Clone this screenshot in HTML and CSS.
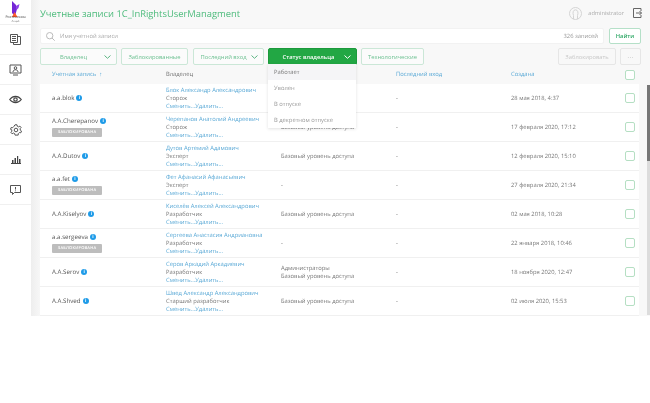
FILE: index.html
```html
<!DOCTYPE html>
<html lang="ru">
<head>
<meta charset="utf-8">
<title>Учетные записи</title>
<link rel="stylesheet" href="styles.css">
</head>
<body>
<div class="app">
  <aside class="side">
    <div class="logo">
      <svg width="9" height="16" viewBox="0 0 9 16"><path d="M1 0 L5 4 L6 8 L4 15 L1 12 Z" fill="#7426d6"/><path d="M5 5 L8.500 3 L7.500 7 L5.500 9 Z" fill="#8f3fe8"/><path d="M1 16 L3.500 11 L6.500 16 Z" fill="#ff5a2a"/></svg>
      <div class="logo-name">Ростелеком</div>
      <div class="logo-sub">Лицей</div>
    </div>
    <div class="nav"><svg width="13" height="13" viewBox="0 0 13 13" fill="none" stroke="#555" stroke-width="1"><path d="M1.500 1.500h7v8h-7zM3 3.500h4M3 5.500h4M3 7.500h4M8.500 3.500h3v8h-7v-2"/></svg></div>
    <div class="nav"><svg width="13" height="12" viewBox="0 0 13 12" fill="none" stroke="#555" stroke-width="1"><path d="M1 1h11v8H1z"/><circle cx="6.500" cy="4" r="1.300"/><path d="M4 8c0-3 5-3 5 0M4 11h5" /></svg></div>
    <div class="nav"><svg width="13" height="9" viewBox="0 0 13 9" fill="none" stroke="#444" stroke-width="1.200"><path d="M.7 4.500C4 .3 9 .3 12.300 4.500 9 8.700 4 8.700.7 4.500z"/><circle cx="6.500" cy="4.500" r="1.700"/></svg></div>
    <div class="nav"><svg width="12" height="12" viewBox="0 0 12 12" fill="none" stroke="#555" stroke-width="1"><circle cx="6" cy="6" r="1.800"/><path d="M5 .8h2l.3 1.500 1.300.6 1.300-.8 1.200 1.500-1 1.100.2 1.500 1.200.8-.7 1.800-1.500-.2-1 1-.1 1.500H5l-.3-1.500-1.300-.6-1.300.8-1.200-1.500 1-1.100-.2-1.500L.5 5.300l.7-1.800 1.500.2 1-1z"/></svg></div>
    <div class="nav"><svg width="10" height="8" viewBox="0 0 10 8" fill="#444"><path d="M0 7h10v1H0zM1 4h1.500v3H1zM3.500 2H5v5H3.500zM6 0h1.200v7H6zM8 3h1.500v4H8z"/></svg></div>
    <div class="nav"><svg width="11" height="10" viewBox="0 0 11 10" fill="none" stroke="#555" stroke-width="1"><path d="M.5.500h10v7H4.500L2.500 9.500v-2h-2z"/><path d="M5.500 2v2.500M5.500 5.500v.7"/></svg></div>
  </aside>
  <main class="main">
    <header class="top">
      <h1 class="title">Учетные записи 1C_InRightsUserManagment</h1>
      <div class="user">
        <svg width="13" height="13" viewBox="0 0 13 13" fill="none" stroke="#d4d4d4" stroke-width="1"><circle cx="6.500" cy="6.500" r="6"/><path d="M4.500 12V8.500C3.500 6 4 2.800 6.500 2.800S9.500 6 8.500 8.500V12"/></svg>
        <span class="user-name">administrator</span>
        <svg width="9" height="10" viewBox="0 0 9 10" fill="none" stroke="#666" stroke-width="1"><path d="M8 3V.5H.5v9H8V7M3 5h5.500M6.500 3l2 2-2 2"/></svg>
      </div>
    </header>
    <div class="search-row">
      <div class="search">
        <svg width="9" height="9" viewBox="0 0 9 9" fill="none" stroke="#bbb" stroke-width="1"><circle cx="3.700" cy="3.700" r="3.200"/><path d="M6 6l2.700 2.700"/></svg>
        <span class="placeholder">Имя учетной записи</span>
        <span class="count">326 записей</span>
      </div>
      <button class="btn find">Найти</button>
    </div>
    <div class="filters">
      <button class="btn f-owner">Владелец <svg class="chev" width="7" height="4" viewBox="0 0 7 4"><path d="M.5.500l3 2.800 3-2.800" fill="none" stroke="#5cb583"/></svg></button>
      <button class="btn f-block">Заблокированные</button>
      <button class="btn f-login">Последний вход <svg class="chev" width="7" height="4" viewBox="0 0 7 4"><path d="M.5.500l3 2.800 3-2.800" fill="none" stroke="#5cb583"/></svg></button>
      <button class="btn f-status">Статус владельца <svg class="chev" width="7" height="4" viewBox="0 0 7 4"><path d="M.5.500l3 2.800 3-2.800" fill="none" stroke="#fff"/></svg></button>
      <button class="btn f-tech">Технологические</button>
      <span class="spacer"></span>
      <button class="btn muted f-lock">Заблокировать</button>
      <button class="btn muted f-more">···</button>
    </div>
    <div class="table">
      <div class="row head">
        <div class="blue">Учетная запись &nbsp;↑</div>
        <div>Владелец</div>
        <div>Группы уровней доступа</div>
        <div class="blue">Последний вход</div>
        <div class="blue">Создана</div>
        <span class="check"></span>
      </div>
      <div class="row body">
        <div class="login"><div class="name"><b>a.a.blok</b><i class="info">i</i></div></div>
        <div class="owner"><a>Блок Александр Александрович</a><span>Сторож</span><a>Сменить...Удалить...</a></div>
        <div>-</div><div>-</div><div>28 мая 2018, 4:37</div><span class="check"></span>
      </div>
      <div class="row body">
        <div class="login"><div class="name"><b>A.A.Cherepanov</b><i class="info">i</i></div><em class="tag">ЗАБЛОКИРОВАНА</em></div>
        <div class="owner"><a>Черепанов Анатолий Андреевич</a><span>Сторож</span><a>Сменить...Удалить...</a></div>
        <div>Базовый уровень доступа</div><div>-</div><div>17 февраля 2020, 17:12</div><span class="check"></span>
      </div>
      <div class="row body">
        <div class="login"><div class="name"><b>A.A.Dutov</b><i class="info">i</i></div></div>
        <div class="owner"><a>Дутов Артемий Адамович</a><span>Эксперт</span><a>Сменить...Удалить...</a></div>
        <div>Базовый уровень доступа</div><div>-</div><div>12 февраля 2020, 15:10</div><span class="check"></span>
      </div>
      <div class="row body">
        <div class="login"><div class="name"><b>a.a.fet</b><i class="info">i</i></div><em class="tag">ЗАБЛОКИРОВАНА</em></div>
        <div class="owner"><a>Фет Афанасий Афанасьевич</a><span>Эксперт</span><a>Сменить...Удалить...</a></div>
        <div>-</div><div>-</div><div>27 февраля 2020, 21:34</div><span class="check"></span>
      </div>
      <div class="row body">
        <div class="login"><div class="name"><b>A.A.Kiselyov</b><i class="info">i</i></div></div>
        <div class="owner"><a>Киселёв Алексей Александрович</a><span>Разработчик</span><a>Сменить...Удалить...</a></div>
        <div>Базовый уровень доступа</div><div>-</div><div>02 мая 2018, 10:28</div><span class="check"></span>
      </div>
      <div class="row body">
        <div class="login"><div class="name"><b>a.a.sergeeva</b><i class="info">i</i></div><em class="tag">ЗАБЛОКИРОВАНА</em></div>
        <div class="owner"><a>Сергеева Анастасия Андриановна</a><span>Разработчик</span><a>Сменить...Удалить...</a></div>
        <div>-</div><div>-</div><div>22 января 2018, 10:46</div><span class="check"></span>
      </div>
      <div class="row body">
        <div class="login"><div class="name"><b>A.A.Serov</b><i class="info">i</i></div></div>
        <div class="owner"><a>Серов Аркадий Аркадиевич</a><span>Разработчик</span><a>Сменить...Удалить...</a></div>
        <div>Администраторы<br>Базовый уровень доступа</div><div>-</div><div>18 ноября 2020, 12:47</div><span class="check"></span>
      </div>
      <div class="row body">
        <div class="login"><div class="name"><b>A.A.Shved</b><i class="info">i</i></div></div>
        <div class="owner"><a>Швед Александр Александрович</a><span>Старший разработчик</span><a>Сменить...Удалить...</a></div>
        <div>Базовый уровень доступа</div><div>-</div><div>02 июля 2020, 15:53</div><span class="check"></span>
      </div>
    </div>
    <div class="scroll"><span class="thumb"></span></div>
    <ul class="menu">
      <li class="on">Работает</li>
      <li>Уволен</li>
      <li>В отпуске</li>
      <li>В декретном отпуске</li>
    </ul>
  </main>
</div>
</body>
</html>
```
FILE: styles.css
```css
* { box-sizing: border-box; }
html, body { margin: 0; padding: 0; background: #fff; }
body { font-family: "Open Sans", sans-serif; font-size: 5.800px; color: #777; height: 403px; overflow: hidden; text-rendering: geometricPrecision; }
.app { display: flex; height: 316px; filter: blur(.3px); }
.side { width: 40px; flex: none; padding-right: 9px; background: linear-gradient(90deg, #fff 31px, #eeeeee 31px, #f7f7f7 40px); }
.logo { height: 25px; display: flex; flex-direction: column; align-items: center; padding-top: 1px; border-bottom: 1px solid #f0f0f0; overflow: hidden; }
.logo-name { font-size: 3.500px; color: #333; line-height: 4px; white-space: nowrap; margin-top: -1px; }
.logo-sub { font-size: 2.500px; color: #777; line-height: 3px; }
.nav { height: 30px; display: flex; align-items: center; justify-content: center; border-bottom: 1px solid #f0f0f0; }
.main { position: relative; flex: 1; min-width: 0; background: #f8f8f8; padding-right: 9px; }
.top { height: 28px; display: flex; align-items: center; justify-content: space-between; padding-bottom: 2px; }
.title { margin: 0; font-size: 9.400px; font-weight: 400; color: #4dbb7c; white-space: nowrap; }
.user { display: flex; align-items: center; margin-right: -1px; }
.user-name { margin: 0 9px 0 6px; font-size: 5.600px; color: #aaa; }
.search-row { display: flex; gap: 5px; height: 16px; }
.search { flex: 1; display: flex; align-items: center; background: #fff; border-radius: 2px; padding: 0 5px; border: 1px solid #f2f2f2; }
.placeholder { margin-left: 5px; color: #aaa; flex: 1; }
.count { color: #999; }
.btn { font: inherit; height: 16px; padding: 0; background: #fbfbfb; border: 1px solid #cbe7d7; border-radius: 2px; color: #6cc091; position: relative; white-space: nowrap; }
.find { width: 32px; color: #2fa866; font-weight: 600; background: #fff; border-color: #b5e0c8; }
.filters { display: flex; height: 17px; margin-top: 4px; }
.filters .btn { height: 17px; }
.chev { position: absolute; right: 5px; top: 6px; }
.f-owner { width: 77px; margin-right: 4px; padding-right: 10px; }
.f-block { width: 67px; margin-right: 5px; }
.f-login { width: 71px; margin-right: 4px; padding-right: 10px; }
.f-status { width: 89px; margin-right: 4px; padding-right: 8px; background: #22a744; border-color: #1c9a3c; color: #fff; font-weight: 600; }
.f-tech { width: 63px; }
.spacer { flex: 1; }
.muted { border-color: #e6e6e6; color: #c8c8c8; background: #f8f8f8; }
.f-lock { width: 58px; margin-right: 4px; }
.f-more { width: 21px; font-size: 8px; line-height: 1; }
.table { margin-right: 2px; }
.row { display: grid; grid-template-columns: 114px 115px 115px 115px 114px 14px; padding-left: 12px; align-items: center; }
.head { height: 19px; }
.head > div { line-height: 11px; }
.body { height: 29px; background: #fff; border-bottom: 1px solid #f0f0f0; }
.blue { color: #5aa9d6; }
.login { display: flex; flex-direction: column; gap: 3px; align-items: flex-start; }
.name { display: flex; align-items: center; gap: 2px; height: 8px; line-height: 8px; }
.name b { font-weight: 400; font-size: 6.200px; color: #555; }
.info { display: block; width: 6px; height: 6px; border-radius: 50%; background: #1e9be8; color: #fff; font-size: 4.500px; font-style: normal; font-weight: 700; line-height: 6px; text-align: center; }
.tag { width: 50px; text-align: center; font-style: normal; font-size: 4px; font-weight: 600; color: #fff; background: #bdbdbd; height: 9px; line-height: 9px; letter-spacing: .2px; border-radius: 1px; }
.owner { display: flex; flex-direction: column; line-height: 8.200px; white-space: nowrap; }
.owner a { color: #5aa9d6; }
.check { width: 10px; height: 10px; border: 1px solid #b5dfc3; border-radius: 2px; background: #fff; display: block; }
.scroll { position: absolute; right: 0; top: 85px; bottom: 1px; width: 3px; background: #dcdcdc; }
.thumb { display: block; height: 76px; background: #777; }
.menu { position: absolute; left: 228px; top: 64px; width: 88px; height: 64px; margin: 0; padding: 0; list-style: none; background: #fff; box-shadow: 0 1px 3px rgba(0,0,0,.12); }
.menu li { height: 16px; line-height: 16px; padding-left: 6px; color: #999; }
.menu .on { background: #f5f5f7; color: #777; }
```
